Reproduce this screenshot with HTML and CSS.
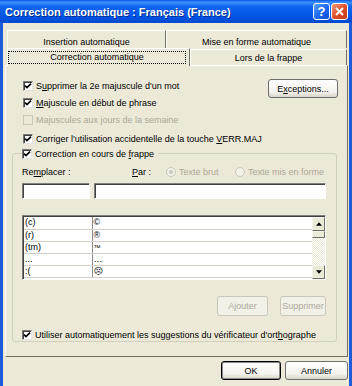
FILE: index.html
```html
<!DOCTYPE html>
<html lang="fr">
<head>
    <meta charset="UTF-8">
    <meta name="viewport" content="width=device-width, initial-scale=1.0">
    <title>Correction automatique</title>
    <link rel="stylesheet" href="styles.css">
</head>
<body>
<div class="window">
    <div class="titlebar">
        <span class="title">Correction automatique : Français (France)</span>
        <span class="tbtn help">?</span>
        <span class="tbtn close">
            <svg viewBox="0 0 11 11"><path d="M2 2 L9 9 M9 2 L2 9"/></svg>
        </span>
    </div>
    <div class="frame">
        <!-- onglets sur deux rangées -->
        <div class="tabs">
            <div class="tabrow back">
                <div class="tab t1">Insertion automatique</div>
                <div class="tab t2">Mise en forme automatique</div>
            </div>
            <div class="tabrow front">
                <div class="tab active"><span class="focus">Correction automatique</span></div>
                <div class="tab t4">Lors de la frappe</div>
            </div>
        </div>

        <div class="panel">
            <div class="top">
                <div class="opts">
                    <label class="opt"><span class="cb"><svg viewBox="0 0 8 8"><path d="M1 3.6 L3 5.6 L7 1.6"/></svg></span><span>S<u>u</u>pprimer la 2e majuscule d'un mot</span></label>
                    <label class="opt"><span class="cb"><svg viewBox="0 0 8 8"><path d="M1 3.6 L3 5.6 L7 1.6"/></svg></span><span><u>M</u>ajuscule en début de phrase</span></label>
                    <label class="opt off"><span class="cb"></span><span>Majuscules aux jours de la semaine</span></label>
                    <label class="opt sep"><span class="cb"><svg viewBox="0 0 8 8"><path d="M1 3.6 L3 5.6 L7 1.6"/></svg></span><span>Corriger l'utilisation accidentelle de la touche <u>V</u>ERR.MAJ</span></label>
                </div>
                <button class="btn exc">E<u>x</u>ceptions...</button>
            </div>

            <fieldset class="group">
                <legend><label class="opt"><span class="cb"><svg viewBox="0 0 8 8"><path d="M1 3.6 L3 5.6 L7 1.6"/></svg></span><span>Correction en cours de <u>f</u>rappe</span></label></legend>

                <div class="fields-head">
                    <span class="lbl-rep">Re<u>m</u>placer :</span>
                    <span class="lbl-par"><u>P</u>ar :</span>
                    <span class="radio r1"><span class="rd sel"></span><span>Texte brut</span></span>
                    <span class="radio"><span class="rd"></span><span>Texte mis en forme</span></span>
                </div>
                <div class="fields">
                    <span class="field small"></span>
                    <span class="field wide"></span>
                </div>

                <div class="list">
                    <table>
                        <tr><td>(c)</td><td>©</td></tr>
                        <tr><td>(r)</td><td>®</td></tr>
                        <tr><td>(tm)</td><td class="tm">™</td></tr>
                        <tr><td>...</td><td>…</td></tr>
                        <tr><td>:(</td><td class="sad">☹</td></tr>
                    </table>
                    <div class="scroll">
                        <span class="sbtn"><svg viewBox="0 0 7 4"><path d="M0 4 L3.5 0 L7 4 Z"/></svg></span>
                        <span class="sbtn thumb"></span>
                        <span class="track"></span>
                        <span class="sbtn"><svg viewBox="0 0 7 4"><path d="M0 0 L7 0 L3.5 4 Z"/></svg></span>
                    </div>
                </div>

                <div class="actions">
                    <button class="btn dis add">Ajouter</button>
                    <button class="btn dis del">Supprimer</button>
                </div>

                <label class="opt last"><span class="cb"><svg viewBox="0 0 8 8"><path d="M1 3.6 L3 5.6 L7 1.6"/></svg></span><span>Utiliser automatiquement les suggestions du vérificateur d'ort<u>h</u>ographe</span></label>
            </fieldset>
        </div>

        <div class="footer">
            <button class="btn default">OK</button>
            <button class="btn cancel">Annuler</button>
        </div>
    </div>
</div>
</body>
</html>
```

FILE: styles.css
```css
* {
    box-sizing: border-box;
}

body {
    margin: 0;
    font-family: "Liberation Sans", Arial, sans-serif;
    font-size: 9px;
    color: #000;
}

.window {
    width: 352px;
    height: 386px;
    background: #ECE9D8;
    display: flex;
    flex-direction: column;
    overflow: hidden;
}

/* barre de titre */
.titlebar {
    height: 23px;
    flex: none;
    display: flex;
    align-items: center;
    padding: 0 4px 0 5px;
    background: linear-gradient(#0A5AE8 0%, #3C8EFC 10%, #0E63F0 30%, #0056E6 70%, #0049CF 100%);
}

.title {
    flex: 1;
    color: #fff;
    font-weight: bold;
    font-size: 11px;
    text-shadow: 1px 1px 0 #0A2A8C;
}

.tbtn {
    width: 17px;
    height: 17px;
    margin-left: 1px;
    border: 1px solid #fff;
    border-radius: 3px;
    display: flex;
    align-items: center;
    justify-content: center;
    color: #fff;
    font-weight: bold;
    font-size: 13px;
}

.help {
    background: linear-gradient(135deg, #5AA2FF, #1A66EE 55%, #0F50D0);
}

.close {
    background: linear-gradient(135deg, #F09A78, #E0502A 50%, #C43A14);
}

.close svg {
    width: 11px;
    height: 11px;
    stroke: #fff;
    stroke-width: 2;
}

.frame {
    flex: 1;
    display: flex;
    flex-direction: column;
    border-left: 3px solid #1F5AD8;
    border-right: 3px solid #1F5AD8;
}

/* onglets */
.tabs {
    padding: 7px 2px 0 4px;
}

.tabrow {
    display: flex;
}

.tab {
    height: 18px;
    display: flex;
    justify-content: center;
    align-items: flex-start;
    padding-top: 6px;
    line-height: 11px;
    border: 1px solid;
    border-color: #fff #716F64 transparent #fff;
    border-bottom: none;
    background: #ECE9D8;
}

.t1 { width: 159px; }
.t2 { width: 181px; }

.active {
    width: 183px;
    height: 18px;
    margin-bottom: -1px;
    padding: 2px 3px 0 0;
    position: relative;
    z-index: 1;
}

.focus {
    width: 100%;
    height: 13px;
    border: 1px dotted #000;
    display: flex;
    align-items: center;
    justify-content: center;
}

.t4 {
    width: 157px;
    height: 16px;
    margin-top: 1px;
    padding-top: 3px;
}

/* panneau */
.panel {
    height: 292px;
    margin: 0 1px 0 2px;
    border: 1px solid;
    border-color: #fff #716F64 #716F64 #fff;
    display: flex;
    flex-direction: column;
}

.top {
    display: flex;
    padding: 11px 9px 0 17px;
}

.opts {
    flex: 1;
    display: flex;
    flex-direction: column;
}

.opt {
    height: 17px;
    display: flex;
    align-items: center;
    gap: 3px;
    white-space: nowrap;
}

.opt.sep {
    margin-top: 2px;
}

.opt.off {
    color: #ACA899;
}

.cb {
    width: 10px;
    height: 10px;
    flex: none;
    background: #fff;
    border: 1px solid;
    border-color: #7A7A7A #E4E4E4 #E4E4E4 #7A7A7A;
    box-shadow: inset 1px 1px 0 #404040;
    display: flex;
    align-items: center;
    justify-content: center;
}

.cb svg {
    width: 8px;
    height: 8px;
    fill: none;
    stroke: #000;
    stroke-width: 1.7;
}

.off .cb {
    background: #ECE9D8;
    border-color: #CAC8BB;
    box-shadow: none;
}

.btn {
    font-family: inherit;
    font-size: 9px;
    color: #000;
    height: 19px;
    padding: 0;
    border: 1px solid #6E6E6E;
    border-radius: 3px;
    background: linear-gradient(#FFFFFF, #F4F3EE 70%, #D8D4C8);
}

.exc {
    width: 70px;
    margin-top: 2px;
}

.btn.dis {
    height: 20px;
    color: #ACA899;
    border-color: #C9C7BA;
    background: #F2F1E8;
}

.add { width: 51px; }
.del { width: 46px; }

/* groupe */
.group {
    margin: 0 10px 0 6px;
    padding: 0 10px 0 9px;
    border: 1px solid #D0D0BF;
    border-radius: 3px;
    min-width: 0;
}

.group legend {
    padding: 0 4px 0 0;
    height: 13px;
}

.group legend .opt {
    height: 13px;
}

.fields-head {
    height: 12px;
    margin-top: 6px;
    display: flex;
    align-items: center;
    white-space: nowrap;
}

.lbl-rep { width: 110px; }
.lbl-par { width: 34px; }

.radio {
    display: flex;
    align-items: center;
    gap: 3px;
    color: #ACA899;
}

.r1 { width: 69px; }

.rd {
    width: 10px;
    height: 10px;
    border: 1px solid #CAC8BB;
    border-radius: 50%;
    background: #F2F1E8;
    display: flex;
    align-items: center;
    justify-content: center;
}

.rd.sel::after {
    content: "";
    width: 4px;
    height: 4px;
    border-radius: 50%;
    background: #CAC8BB;
}

.fields {
    display: flex;
    gap: 4px;
    margin-top: 5px;
}

.field {
    height: 16px;
    background: #fff;
    border: 1px solid;
    border-color: #808080 #fff #fff #808080;
    box-shadow: inset 1px 1px 0 #404040;
}

.small { width: 68px; }
.wide { flex: 1; }

/* liste */
.list {
    height: 65px;
    margin-top: 16px;
    display: flex;
    background: #fff;
    border: 1px solid;
    border-color: #808080 #fff #fff #808080;
    box-shadow: inset 1px 1px 0 #404040;
    padding: 1px 0 0 1px;
    overflow: hidden;
}

.list table {
    flex: 1;
    border-collapse: collapse;
    align-self: flex-start;
}

.list td {
    height: 12px;
    padding: 0 0 0 1px;
    border-bottom: 1px solid #D4D0C8;
    line-height: 11px;
}

.list td:first-child {
    width: 68px;
    border-right: 1px solid #8C8C8C;
}

.sad {
    font-family: "DejaVu Sans", sans-serif;
    font-size: 9px;
}

.tm {
    font-size: 7px;
}

.scroll {
    width: 13px;
    flex: none;
    display: flex;
    flex-direction: column;
}

.sbtn {
    height: 14px;
    background: #ECE9D8;
    border: 1px solid;
    border-color: #F4F3EE #716F64 #716F64 #F4F3EE;
    display: flex;
    align-items: center;
    justify-content: center;
}

.sbtn svg {
    width: 6px;
    height: 4px;
}

.thumb {
    height: 7px;
}

.track {
    flex: 1;
    background: repeating-conic-gradient(#ECE9D8 0 25%, #fff 0 50%) 0 0 / 2px 2px;
}

.actions {
    display: flex;
    justify-content: flex-end;
    gap: 12px;
    margin-top: 16px;
}

.opt.last {
    height: 12px;
    margin-top: 13px;
}

/* boutons du bas */
.footer {
    display: flex;
    justify-content: flex-end;
    gap: 4px;
    padding: 4px 1px 0 0;
}

.footer .btn {
    height: 19px;
}

.default {
    width: 60px;
    border-color: #000;
    box-shadow: inset 0 0 0 1px #8C8C8C;
}

.cancel {
    width: 63px;
}
```
